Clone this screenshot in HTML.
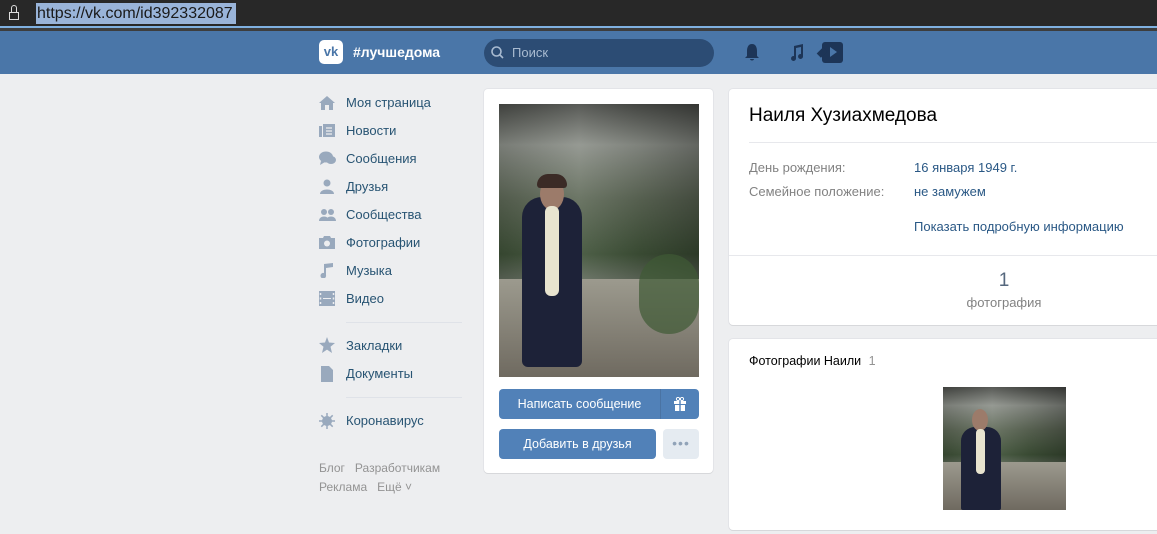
<!DOCTYPE html>
<html><head><meta charset="utf-8"><style>
*{margin:0;padding:0;box-sizing:border-box}
body{width:1157px;height:534px;overflow:hidden;background:#edeef0;font-family:"Liberation Sans",sans-serif;position:relative;font-size:13px}
.a{position:absolute}
.card{position:absolute;background:#fff;border-radius:4px;box-shadow:0 1px 0 0 #d7d8db,0 0 0 1px #e3e4e8}
.nav div{position:absolute;left:346px;color:#285473;font-size:13px}
.nav svg{position:absolute;left:319px}
.lbl{color:#828282}
.val{color:#2a5885}
.photo{background:linear-gradient(90deg,rgba(0,0,0,.15),rgba(255,255,255,.08) 40%,rgba(0,0,0,.1) 70%,rgba(0,0,0,.3)),linear-gradient(180deg,#4a4c48 0%,#8d918a 15%,#5f6a58 35%,#3f5238 55%,#7d807a 72%,#8a8780 100%);overflow:hidden}
.fig{position:absolute;background:#1d2238}
</style></head><body>
<div class="a" style="left:0;top:0;width:1157px;height:26px;background:#282828"></div>
<div class="a" style="left:36px;top:3px;width:200px;height:21px;background:#99b4d9"></div>
<div class="a" style="left:37px;top:3px;font-size:16px;color:#1a1a1a;line-height:21px">https://vk.com/id392332087</div>
<div class="a" style="left:9px;top:12px;width:10px;height:8px;border:1px solid #ddd"></div>
<div class="a" style="left:11px;top:5px;width:6px;height:8px;border:1px solid #ddd;border-bottom:none;border-radius:3px 3px 0 0"></div>
<div class="a" style="left:0;top:26px;width:1157px;height:2px;background:#7fb0e0"></div>
<div class="a" style="left:0;top:28px;width:1157px;height:3px;background:#3d3d3d"></div>
<div class="a" style="left:0;top:31px;width:1157px;height:43px;background:#4a76a8"></div>
<div class="a" style="left:319px;top:40px;width:24px;height:24px;background:#fff;border-radius:5px;color:#4a76a8;font-weight:bold;font-size:13px;text-align:center;line-height:24px">vk</div>
<div class="a" style="left:353px;top:44px;color:#fff;font-weight:bold;font-size:14px">#лучшедома</div>
<div class="a" style="left:484px;top:39px;width:230px;height:28px;background:#2c4c74;border-radius:14px"></div>
<svg class="a" style="left:490px;top:45px" width="16" height="16"><circle cx="6.5" cy="6.5" r="4.5" fill="none" stroke="#a9bbd1" stroke-width="1.6"/><line x1="10" y1="10" x2="13" y2="13" stroke="#a9bbd1" stroke-width="1.6"/></svg>
<div class="a" style="left:512px;top:45px;color:#a9bbd1;font-size:13px">Поиск</div>
<svg class="a" style="left:743px;top:43px" width="18" height="20"><path d="M9 1 C5 1 4 5 4 8 L4 13 L2 15 L16 15 L14 13 L14 8 C14 5 13 1 9 1Z M7 16 L11 16 C11 18 7 18 7 16Z" fill="#1d3557"/></svg>
<svg class="a" style="left:788px;top:43px" width="18" height="20"><path d="M6 3 L15 1 L15 13 A2.5 2.5 0 1 1 13 11 L13 4 L8 5 L8 15 A2.5 2.5 0 1 1 6 13Z" fill="#1d3557"/></svg>
<div class="a" style="left:822px;top:42px;width:21px;height:21px;background:#1d3557;border-radius:3px"></div>
<div class="a" style="left:819px;top:48px;width:6px;height:9px;background:#1d3557;transform:rotate(45deg)"></div>
<div class="a" style="left:830px;top:47px;width:0;height:0;border-left:7px solid #4a76a8;border-top:5px solid transparent;border-bottom:5px solid transparent"></div>

<div class="nav">
<svg style="top:95px" width="16" height="15"><path d="M8 1 L16 8 L14 8 L14 15 L10 15 L10 10 L6 10 L6 15 L2 15 L2 8 L0 8Z" fill="#99a9bd"/></svg><div style="top:95px">Моя страница</div>
<svg style="top:123px" width="16" height="15"><path d="M0 3 L3 3 L3 14 L0 14Z M4 1 L16 1 L16 14 L4 14Z" fill="#99a9bd"/><path d="M7 5h6M7 8h6M7 11h6" stroke="#edeef0" stroke-width="1.3"/></svg><div style="top:123px">Новости</div>
<svg style="top:151px" width="17" height="15"><ellipse cx="7" cy="6" rx="7" ry="5.5" fill="#99a9bd"/><path d="M2 10 L1 14 L6 11Z" fill="#99a9bd"/><ellipse cx="12" cy="9" rx="5" ry="4" fill="#99a9bd"/></svg><div style="top:151px">Сообщения</div>
<svg style="top:179px" width="16" height="15"><circle cx="8" cy="4" r="3.5" fill="#99a9bd"/><path d="M1 15 C1 9 15 9 15 15Z" fill="#99a9bd"/></svg><div style="top:179px">Друзья</div>
<svg style="top:207px" width="17" height="15"><circle cx="5" cy="5" r="3" fill="#99a9bd"/><circle cx="12" cy="5" r="3" fill="#99a9bd"/><path d="M0 14 C0 8 10 8 10 14Z M7 14 C7 8 17 8 17 14Z" fill="#99a9bd"/></svg><div style="top:207px">Сообщества</div>
<svg style="top:235px" width="16" height="15"><path d="M0 3 L4 3 L5 1 L11 1 L12 3 L16 3 L16 14 L0 14Z" fill="#99a9bd"/><circle cx="8" cy="8.5" r="3" fill="#edeef0"/></svg><div style="top:235px">Фотографии</div>
<svg style="top:263px" width="16" height="15"><path d="M5 1 L14 0 L14 4 L7 5 L7 12 A2.8 2.8 0 1 1 5 10Z" fill="#99a9bd"/></svg><div style="top:263px">Музыка</div>
<svg style="top:291px" width="16" height="15"><rect x="0" y="0" width="16" height="15" fill="#99a9bd"/><path d="M1.5 2v2M1.5 6.5v2M1.5 11v2M14.5 2v2M14.5 6.5v2M14.5 11v2" stroke="#edeef0" stroke-width="1.5"/><path d="M4 7.5h8" stroke="#edeef0"/></svg><div style="top:291px">Видео</div>
<span class="a" style="left:346px;top:322px;width:116px;height:1px;background:#dfe2e8"></span>
<svg style="top:337px" width="16" height="16"><path d="M8 0 L10 5.5 L16 6 L11.5 9.8 L13 16 L8 12.6 L3 16 L4.5 9.8 L0 6 L6 5.5Z" fill="#99a9bd"/></svg><div style="top:338px">Закладки</div>
<svg style="top:366px" width="16" height="16"><path d="M2 0 L10 0 L14 4 L14 16 L2 16Z" fill="#99a9bd"/></svg><div style="top:366px">Документы</div>
<span class="a" style="left:346px;top:397px;width:116px;height:1px;background:#dfe2e8"></span>
<svg style="top:413px" width="16" height="16"><circle cx="8" cy="8" r="5" fill="#99a9bd"/><path d="M8 0v16M0 8h16M2.3 2.3l11.4 11.4M13.7 2.3L2.3 13.7" stroke="#99a9bd" stroke-width="1.5"/></svg><div style="top:413px">Коронавирус</div>
</div>
<div class="a" style="left:319px;top:461px;color:#939393;font-size:12px">Блог&nbsp;&nbsp;&nbsp;Разработчикам</div>
<div class="a" style="left:319px;top:480px;color:#939393;font-size:12px">Реклама&nbsp;&nbsp;&nbsp;Ещё ˅</div>

<div class="card" style="left:484px;top:89px;width:229px;height:384px"></div>
<div class="a photo" style="left:499px;top:104px;width:200px;height:273px">
<div class="a" style="left:0;top:175px;width:200px;height:98px;background:linear-gradient(180deg,#9c9a8e,#6f6a60)"></div>
<div class="a" style="left:140px;top:150px;width:60px;height:80px;background:#3f5a35;opacity:.7;border-radius:30px"></div>
<div class="fig" style="left:23px;top:93px;width:60px;height:170px;border-radius:20px 20px 6px 6px"></div>
<div class="a" style="left:41px;top:74px;width:24px;height:32px;background:#9c7b6a;border-radius:50%"></div>
<div class="a" style="left:38px;top:70px;width:30px;height:14px;background:#3b2b26;border-radius:14px 14px 4px 4px"></div>
<div class="a" style="left:46px;top:102px;width:14px;height:90px;background:#e8e4cf;border-radius:6px"></div>
</div>
<div class="a" style="left:499px;top:389px;width:200px;height:30px;background:#5181b8;border-radius:4px"></div>
<div class="a" style="left:660px;top:389px;width:1px;height:30px;background:#4a73a3"></div>
<div class="a" style="left:499px;top:397px;width:161px;text-align:center;color:#fff;font-size:12.5px">Написать сообщение</div>
<svg class="a" style="left:673px;top:397px" width="14" height="14"><path d="M1 4h12v3H1zM2 8h10v6H2z" fill="#fff"/><path d="M7 4v10" stroke="#5181b8" stroke-width="1.4"/><circle cx="5" cy="2" r="1.6" fill="none" stroke="#fff"/><circle cx="9" cy="2" r="1.6" fill="none" stroke="#fff"/></svg>
<div class="a" style="left:499px;top:429px;width:157px;height:30px;background:#5181b8;border-radius:4px"></div>
<div class="a" style="left:499px;top:437px;width:157px;text-align:center;color:#fff;font-size:12.5px">Добавить в друзья</div>
<div class="a" style="left:663px;top:429px;width:36px;height:30px;background:#e5ebf1;border-radius:4px;color:#91a3b8;text-align:center;line-height:28px;font-size:14px;letter-spacing:1px">•••</div>

<div class="card" style="left:729px;top:89px;width:440px;height:236px"></div>
<div class="a" style="left:749px;top:105px;font-size:19px;color:#000">Наиля Хузиахмедова</div>
<div class="a" style="left:749px;top:142px;width:420px;height:1px;background:#e7e8ec"></div>
<div class="a lbl" style="left:749px;top:160px">День рождения:</div>
<div class="a val" style="left:914px;top:160px">16 января 1949 г.</div>
<div class="a lbl" style="left:749px;top:184px">Семейное положение:</div>
<div class="a val" style="left:914px;top:184px">не замужем</div>
<div class="a val" style="left:914px;top:219px">Показать подробную информацию</div>
<div class="a" style="left:729px;top:255px;width:440px;height:1px;background:#e7e8ec"></div>
<div class="a" style="left:964px;top:270px;width:80px;text-align:center;font-size:19px;color:#55677d">1</div>
<div class="a" style="left:944px;top:295px;width:120px;text-align:center;color:#828282">фотография</div>

<div class="card" style="left:729px;top:339px;width:440px;height:191px"></div>
<div class="a" style="left:749px;top:354px;color:#000;font-size:12.5px">Фотографии Наили <span style="color:#939393;margin-left:4px">1</span></div>
<div class="a photo" style="left:943px;top:387px;width:123px;height:123px">
<div class="a" style="left:0;top:75px;width:123px;height:48px;background:linear-gradient(180deg,#9c9a8e,#6f6a60)"></div>
<div class="fig" style="left:18px;top:40px;width:40px;height:83px;border-radius:14px 14px 2px 2px"></div>
<div class="a" style="left:29px;top:22px;width:16px;height:22px;background:#9c7b6a;border-radius:50%"></div>
<div class="a" style="left:33px;top:42px;width:9px;height:45px;background:#e8e4cf;border-radius:4px"></div>
</div>
</body></html>
